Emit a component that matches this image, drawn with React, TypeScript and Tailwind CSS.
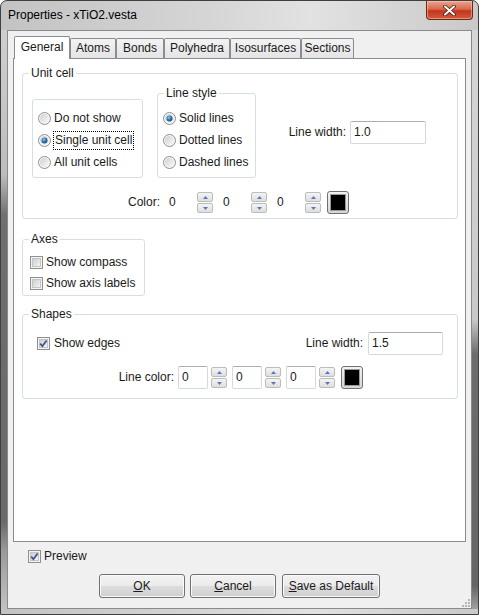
import type { ReactNode } from "react"

const tabs = [
  { label: "General", w: "w-[56px]" },
  { label: "Atoms", w: "w-[46px]" },
  { label: "Bonds", w: "w-[48px]" },
  { label: "Polyhedra", w: "w-[66px]" },
  { label: "Isosurfaces", w: "w-[71px]" },
  { label: "Sections", w: "w-[53px]" },
]

function Radio({ checked = false }: { checked?: boolean }) {
  return (
    <svg width="13" height="13" viewBox="0 0 13 13" className="shrink-0">
      <defs>
        <linearGradient id="rb-bg" x1="0" y1="0" x2="1" y2="1">
          <stop offset="0" stopColor="#cfcfcf" />
          <stop offset="1" stopColor="#fafafa" />
        </linearGradient>
        <radialGradient id="rb-dot" cx="0.4" cy="0.35" r="0.7">
          <stop offset="0" stopColor="#8fd0f7" />
          <stop offset="0.5" stopColor="#2c79b3" />
          <stop offset="1" stopColor="#144770" />
        </radialGradient>
      </defs>
      <circle cx="6.5" cy="6.5" r="6" fill="#f6f6f6" stroke="#8e8f8f" />
      <circle cx="6.5" cy="6.5" r="4.5" fill="url(#rb-bg)" />
      {checked && <circle cx="6.5" cy="6.5" r="3" fill="url(#rb-dot)" />}
    </svg>
  )
}

function Check({ checked = false }: { checked?: boolean }) {
  return (
    <svg width="13" height="13" viewBox="0 0 13 13" className="shrink-0">
      <defs>
        <linearGradient id="cb-bg" x1="0" y1="0" x2="1" y2="1">
          <stop offset="0" stopColor="#cbcbcb" />
          <stop offset="1" stopColor="#f7f7f7" />
        </linearGradient>
      </defs>
      <rect x="0.5" y="0.5" width="12" height="12" fill="#f4f4f4" stroke="#8e8f8f" />
      <rect x="2.5" y="2.5" width="8" height="8" fill="url(#cb-bg)" stroke="#c4c4c4" />
      {checked && (
        <path d="M3.2 6.6 L5.4 9.2 L9.6 3.4" fill="none" stroke="#3c4f8f" strokeWidth="1.7" />
      )}
    </svg>
  )
}

function SpinHalf({ up }: { up?: boolean }) {
  return (
    <div className="flex h-[10px] w-[16px] items-center justify-center rounded-[2px] border border-[#bcbcbc] bg-[linear-gradient(#f4f4f4,#dedede)]">
      <svg width="5" height="3" viewBox="0 0 5 3">
        <path d={up ? "M0 3 L2.5 0 L5 3 Z" : "M0 0 L2.5 3 L5 0 Z"} fill="#5a78b8" />
      </svg>
    </div>
  )
}

function Spin() {
  return (
    <div className="flex flex-col gap-px">
      <SpinHalf up />
      <SpinHalf />
    </div>
  )
}

function Field({ value, bare = false, w = "w-[30px]" }: { value: string; bare?: boolean; w?: string }) {
  return (
    <div
      className={`flex h-[23px] ${w} items-center rounded-[2px] border pl-[3px] ${
        bare ? "border-transparent" : "border-[#d5d8de] border-t-[#abadb3] bg-white"
      }`}
    >
      {value}
    </div>
  )
}

function Swatch() {
  return (
    <div className="h-[23px] w-[22px] rounded-[3px] border border-[#707070] bg-[linear-gradient(#f2f2f2,#d6d6d6)] p-[2px]">
      <div className="h-full w-full border border-[#9a9a9a] bg-black" />
    </div>
  )
}

function ColorInputs({ bare = false }: { bare?: boolean }) {
  const gapA = bare ? "ml-[2px]" : "ml-[3px]"
  const gapB = bare ? "ml-[6px]" : "ml-[5px]"
  return (
    <>
      <Field value="0" bare={bare} />
      <div className={gapA}><Spin /></div>
      <div className={gapB}><Field value="0" bare={bare} /></div>
      <div className={gapA}><Spin /></div>
      <div className={gapB}><Field value="0" bare={bare} /></div>
      <div className={gapA}><Spin /></div>
      <div className="ml-[6px]"><Swatch /></div>
    </>
  )
}

function GroupBox({ title, className = "", children }: { title: string; className?: string; children: ReactNode }) {
  return (
    <fieldset className={`rounded-[3px] border border-[#d5dfe5] ${className}`}>
      <legend className="ml-[6px] px-[2px] leading-[15px]">{title}</legend>
      {children}
    </fieldset>
  )
}

function Button({ children, w }: { children: ReactNode; w: string }) {
  return (
    <div
      className={`flex h-[24px] ${w} items-center justify-center rounded-[3px] border border-[#707070] bg-[linear-gradient(#f2f2f2_0%,#ebebeb_50%,#dddddd_50%,#cfcfcf_100%)] shadow-[inset_0_0_0_1px_#fbfbfb]`}
    >
      {children}
    </div>
  )
}

export default function App() {
  return (
    <div className="h-[615px] w-[479px] overflow-hidden bg-white font-['Liberation_Sans',Arial,sans-serif] text-[12px] leading-[15px] text-[#1a1a1a]">
      <div className="flex h-[615px] w-[479px] flex-col rounded-t-[7px] border border-[#3f3f3f] bg-[linear-gradient(90deg,#c3c3c3,#d6d6d6_45%,#e2e2e2_65%,#c9c9c9)]">
        {/* Title bar */}
        <div className="flex h-[29px] items-start justify-between">
          <div className="pl-[7px] pt-[7px] text-black">Properties - xTiO2.vesta</div>
          <div className="mr-[5px] flex h-[19px] w-[47px] items-center justify-center rounded-b-[4px] border border-t-0 border-[#6b2a1c] bg-[linear-gradient(#eba48f,#d86a4e_45%,#c2371d_55%,#d35a3c)] shadow-[inset_0_0_0_1px_rgba(255,220,200,0.45)]">
            <svg width="13" height="11" viewBox="0 0 13 11">
              <path d="M2 1.5 L11 9.5 M11 1.5 L2 9.5" stroke="#4a1a10" strokeWidth="3.6" strokeLinecap="round" />
              <path d="M2 1.5 L11 9.5 M11 1.5 L2 9.5" stroke="#ffffff" strokeWidth="2" strokeLinecap="round" />
            </svg>
          </div>
        </div>

        {/* Body with side frames */}
        <div className="flex flex-1">
          <div className="w-[6px] bg-[linear-gradient(#cfcfcf_0%,#bdbdbd_25%,#6f6f6f_32%,#6a6a6a_85%,#9a9a9a_90%,#c2c2c2_100%)]" />
          <div className="relative flex h-[579px] w-[465px] flex-col border border-[#8a8a8a] bg-[#f0f0f0]">
            {/* Tabs */}
            <div className="ml-[5px] mt-[5px] w-[453px]">
              <div className="flex h-[22px] items-end pl-[1px]">
                {tabs.map((t, i) =>
                  i === 0 ? (
                    <div
                      key={t.label}
                      className={`relative z-10 -mb-px flex h-[23px] ${t.w} items-center justify-center rounded-t-[2px] border border-b-0 border-[#898c95] bg-white pb-[1px]`}
                    >
                      {t.label}
                    </div>
                  ) : (
                    <div
                      key={t.label}
                      className={`flex h-[20px] ${t.w} items-center justify-center rounded-t-[2px] border border-b-0 border-[#898c95] bg-[linear-gradient(#f3f3f3,#e4e4e4)]`}
                    >
                      {t.label}
                    </div>
                  )
                )}
              </div>

              {/* Tab panel */}
              <div className="h-[484px] border border-[#898c95] bg-white pl-[8px] pt-[7px]">
                <GroupBox title="Unit cell" className="w-[436px]">
                  <div className="flex items-end pl-[9px] pt-[5px]">
                    <div className="flex w-[111px] flex-col rounded-[3px] border border-[#d5dfe5] pb-[4px] pl-[5px] pt-[7px]">
                      <div className="flex h-[22px] items-center gap-[3px]">
                        <Radio />
                        <span>Do not show</span>
                      </div>
                      <div className="flex h-[22px] items-center gap-[2px]">
                        <Radio checked />
                        <span className="border border-dotted border-black px-[1px] leading-[17px]">Single unit cell</span>
                      </div>
                      <div className="flex h-[22px] items-center gap-[3px]">
                        <Radio />
                        <span>All unit cells</span>
                      </div>
                    </div>

                    <GroupBox title="Line style" className="ml-[14px] w-[99px]">
                      <div className="flex flex-col pb-[4px] pl-[5px] pt-[6px]">
                        <div className="flex h-[22px] items-center gap-[3px]">
                          <Radio checked />
                          <span>Solid lines</span>
                        </div>
                        <div className="flex h-[22px] items-center gap-[3px]">
                          <Radio />
                          <span>Dotted lines</span>
                        </div>
                        <div className="flex h-[22px] items-center gap-[3px]">
                          <Radio />
                          <span>Dashed lines</span>
                        </div>
                      </div>
                    </GroupBox>

                    <div className="mb-[34px] ml-[30px] flex items-center">
                      <div className="w-[60px] text-right">Line width:</div>
                      <div className="ml-[4px]">
                        <Field value="1.0" w="w-[76px]" />
                      </div>
                    </div>
                  </div>

                  <div className="ml-[97px] mt-[13px] flex items-center pb-[4px]">
                    <div className="mr-[5px] w-[40px] text-right">Color:</div>
                    <ColorInputs bare />
                  </div>
                </GroupBox>

                <GroupBox title="Axes" className="mt-[13px] w-[123px]">
                  <div className="flex flex-col pb-[1px] pl-[7px] pt-[5px]">
                    <div className="flex h-[21px] items-center gap-[3px]">
                      <Check />
                      <span>Show compass</span>
                    </div>
                    <div className="flex h-[21px] items-center gap-[3px]">
                      <Check />
                      <span>Show axis labels</span>
                    </div>
                  </div>
                </GroupBox>

                <GroupBox title="Shapes" className="mt-[11px] w-[436px]">
                  <div className="pb-[9px] pt-[10px]">
                    <div className="flex h-[23px] items-center justify-between pl-[14px] pr-[14px]">
                      <div className="flex items-center gap-[4px]">
                        <Check checked />
                        <span>Show edges</span>
                      </div>
                      <div className="flex items-center">
                        <div className="w-[60px] text-right">Line width:</div>
                        <div className="ml-[5px]">
                          <Field value="1.5" w="w-[75px]" />
                        </div>
                      </div>
                    </div>
                    <div className="ml-[91px] mt-[11px] flex items-center">
                      <div className="mr-[4px] w-[60px] text-right">Line color:</div>
                      <ColorInputs />
                    </div>
                  </div>
                </GroupBox>
              </div>
            </div>

            {/* Preview */}
            <div className="ml-[20px] mt-[7px] flex h-[15px] items-center gap-[3px]">
              <Check checked />
              <span>Preview</span>
            </div>

            {/* Buttons */}
            <div className="ml-[91px] mt-[10px] flex items-center">
              <Button w="w-[86px]">
                <u>O</u>K
              </Button>
              <div className="ml-[5px]">
                <Button w="w-[86px]">
                  <u>C</u>ancel
                </Button>
              </div>
              <div className="ml-[6px]">
                <Button w="w-[98px]">
                  <u>S</u>ave as Default
                </Button>
              </div>
            </div>

            {/* Resize grip */}
            <svg className="absolute bottom-[1px] right-[1px]" width="10" height="10" viewBox="0 0 10 10">
              {[
                [8, 0], [8, 3], [5, 3], [8, 6], [5, 6], [2, 6],
              ].map(([x, y], i) => (
                <rect key={i} x={x} y={y + 2} width="2" height="2" fill="#b4b4b4" />
              ))}
            </svg>
          </div>
          <div className="w-[6px] bg-[linear-gradient(#d6d6d6_0%,#c8c8c8_50%,#6c6c6c_56%,#666666_96%,#a0a0a0_100%)]" />
        </div>
        <div className="h-[5px]" />
      </div>
    </div>
  )
}
